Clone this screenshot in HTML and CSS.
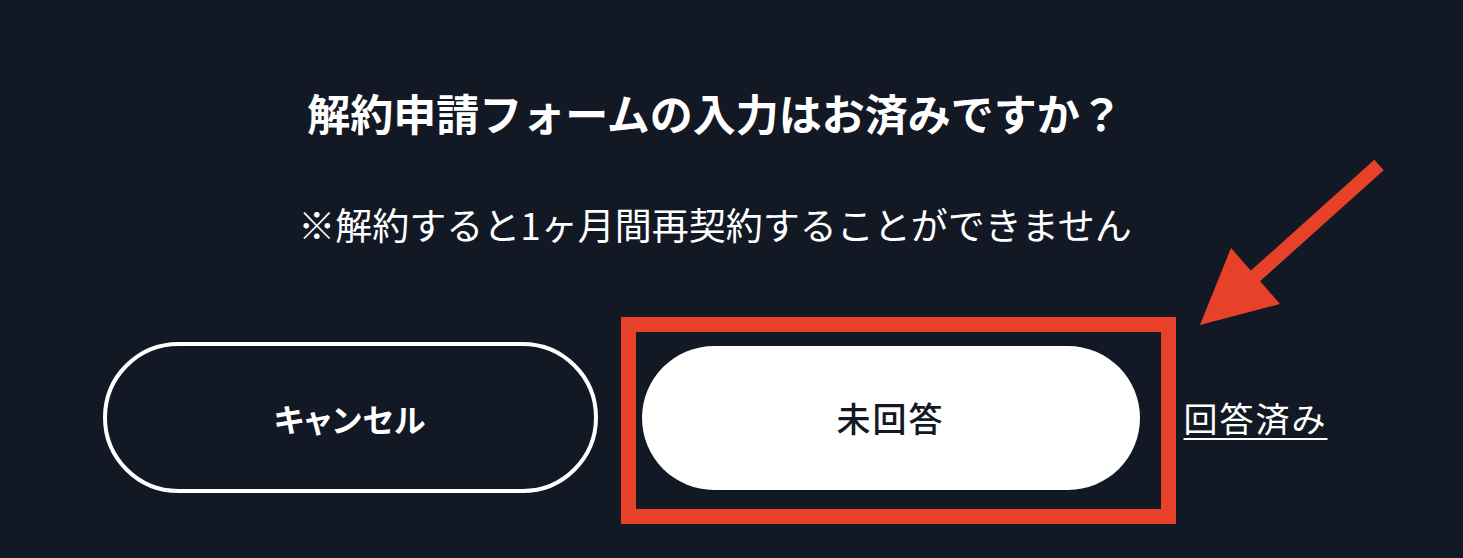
FILE: index.html
```html
<!DOCTYPE html>
<html lang="ja">
<head>
<meta charset="utf-8">
<link rel="stylesheet" href="styles.css">
</head>
<body>
<main class="dialog">
  <h1 class="title">解約申請フォームの入力はお済みですか？</h1>
  <p class="note">※解約すると1ヶ月間再契約することができません</p>
  <div class="actions">
    <button class="btn btn-outline">キャンセル</button>
    <div class="highlight-wrap">
      <button class="btn btn-solid">未回答</button>
      <span class="annot-box"></span>
    </div>
    <a class="link" href="#">回答済み</a>
  </div>
</main>
<svg class="annot-arrow" width="1463" height="558" viewBox="0 0 1463 558">
  <line x1="1379" y1="165" x2="1252" y2="279" stroke="#e8412a" stroke-width="14"/>
  <polygon points="1200,325 1231,248 1280,304" fill="#e8412a"/>
</svg>
</body>
</html>
```
FILE: styles.css
```css
html, body {
  margin: 0;
  padding: 0;
}
body {
  background: #131825;
  width: 1463px;
  height: 558px;
  overflow: hidden;
  position: relative;
  font-family: "Noto Sans CJK JP", "Noto Sans", sans-serif;
  color: #ffffff;
}
.dialog {
  display: flex;
  flex-direction: column;
  align-items: center;
  padding-right: 33px;
  padding-top: 86px;
}
.title {
  margin: 0;
  font-size: 43px;
  line-height: 52px;
  font-weight: 700;
}
.note {
  margin: 64px 0 0;
  font-size: 37px;
  line-height: 44px;
  font-weight: 400;
}
.actions {
  margin-top: 96px;
  display: flex;
  align-items: center;
  gap: 44px;
}
.btn {
  font-family: inherit;
  border-radius: 999px;
  box-sizing: border-box;
  padding: 0;
  cursor: pointer;
}
.btn-outline {
  width: 495px;
  height: 151px;
  background: transparent;
  border: 4px solid #ffffff;
  color: #ffffff;
  font-size: 32px;
  font-weight: 700;
  font-feature-settings: "palt";
  letter-spacing: 1px;
}
.highlight-wrap {
  position: relative;
}
.btn-solid {
  display: block;
  width: 498px;
  height: 144px;
  background: #ffffff;
  border: none;
  color: #131825;
  font-size: 34px;
  font-weight: 500;
  letter-spacing: 2px;
}
.annot-box {
  position: absolute;
  left: -21px;
  top: -29px;
  width: 555px;
  height: 207px;
  box-sizing: border-box;
  border: 15px solid #e8412a;
  pointer-events: none;
}
.link {
  color: #ffffff;
  font-size: 34px;
  letter-spacing: 2px;
  text-decoration: underline;
  text-underline-offset: 6px;
  text-decoration-thickness: 2px;
}
.annot-arrow {
  position: absolute;
  left: 0;
  top: 0;
  pointer-events: none;
}
```
